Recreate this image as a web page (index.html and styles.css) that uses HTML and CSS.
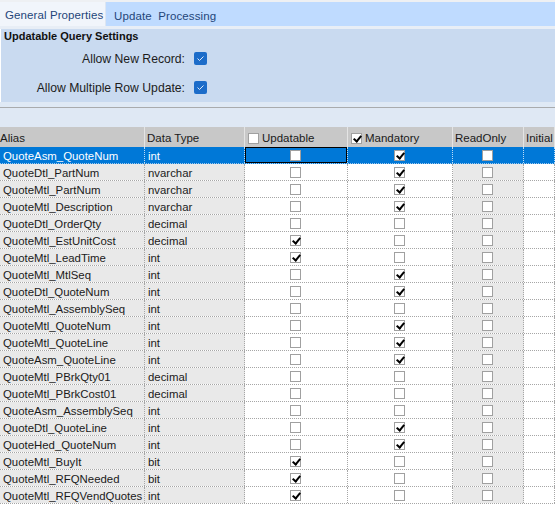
FILE: index.html
```html
<!DOCTYPE html>
<html lang="en">
<head>
    <meta charset="UTF-8">
    <title>Updatable Query Settings</title>
    <link rel="stylesheet" href="styles.css">
</head>
<body>

    <!-- Tabs -->
    <div class="tab-bar">
        <div class="tab active">General Properties</div>
        <div class="tab">Update&nbsp; Processing</div>
    </div>
    <div class="tab-gap"></div>

    <!-- Settings panel -->
    <div class="settings">
        <h3>Updatable Query Settings</h3>
        <div class="options">
            <span class="option-label">Allow New Record:</span>
            <span class="blue-check"><svg viewBox="0 0 13 13"><polyline points="3.5,6.5 5.5,8.5 9.5,4.5" /></svg></span>
            <span class="option-label">Allow Multiple Row Update:</span>
            <span class="blue-check"><svg viewBox="0 0 13 13"><polyline points="3.5,6.5 5.5,8.5 9.5,4.5" /></svg></span>
        </div>
    </div>
    <div class="settings-foot"></div>
    <div class="group-area"></div>

    <!-- Column grid -->
    <div class="grid" id="grid">
        <div class="grid-row header">
            <div class="cell alias">Alias</div>
            <div class="cell">Data Type</div>
            <div class="cell"><span class="box"></span>Updatable</div>
            <div class="cell"><span class="box checked"></span>Mandatory</div>
            <div class="cell">ReadOnly</div>
            <div class="cell">Initial</div>
        </div>
    </div>

    <script>
        // alias, type, updatable, mandatory, readonly
        const columns = [
            ["QuoteAsm_QuoteNum", "int", 0, 1, 0],
            ["QuoteDtl_PartNum", "nvarchar", 0, 1, 0],
            ["QuoteMtl_PartNum", "nvarchar", 0, 1, 0],
            ["QuoteMtl_Description", "nvarchar", 0, 1, 0],
            ["QuoteDtl_OrderQty", "decimal", 0, 0, 0],
            ["QuoteMtl_EstUnitCost", "decimal", 1, 0, 0],
            ["QuoteMtl_LeadTime", "int", 1, 0, 0],
            ["QuoteMtl_MtlSeq", "int", 0, 1, 0],
            ["QuoteDtl_QuoteNum", "int", 0, 1, 0],
            ["QuoteMtl_AssemblySeq", "int", 0, 0, 0],
            ["QuoteMtl_QuoteNum", "int", 0, 1, 0],
            ["QuoteMtl_QuoteLine", "int", 0, 1, 0],
            ["QuoteAsm_QuoteLine", "int", 0, 1, 0],
            ["QuoteMtl_PBrkQty01", "decimal", 0, 0, 0],
            ["QuoteMtl_PBrkCost01", "decimal", 0, 0, 0],
            ["QuoteAsm_AssemblySeq", "int", 0, 0, 0],
            ["QuoteDtl_QuoteLine", "int", 0, 1, 0],
            ["QuoteHed_QuoteNum", "int", 0, 1, 0],
            ["QuoteMtl_BuyIt", "bit", 1, 0, 0],
            ["QuoteMtl_RFQNeeded", "bit", 1, 0, 0],
            ["QuoteMtl_RFQVendQuotes", "int", 1, 0, 0]
        ];

        function box(on) {
            return '<span class="box' + (on ? ' checked' : '') + '"></span>';
        }

        const grid = document.getElementById("grid");
        columns.forEach((col, index) => {
            const row = document.createElement("div");
            row.className = "grid-row" + (index === 0 ? " selected" : "");
            row.innerHTML =
                '<div class="cell text grey">' + col[0] + '</div>' +
                '<div class="cell text grey">' + col[1] + '</div>' +
                '<div class="cell check' + (index === 0 ? ' focus' : '') + '">' + box(col[2]) + '</div>' +
                '<div class="cell check">' + box(col[3]) + '</div>' +
                '<div class="cell check grey">' + box(col[4]) + '</div>' +
                '<div class="cell"></div>';
            grid.appendChild(row);
        });
    </script>

</body>
</html>
```

FILE: styles.css
```css
/* General Reset */
* {
    margin: 0;
    padding: 0;
    box-sizing: border-box;
}

body {
    font-family: 'Liberation Sans', Arial, sans-serif;
    background-color: #fff;
    color: #1a1a1a;
    width: 555px;
    overflow: hidden;
}

/* Tabs */
.tab-bar {
    display: flex;
    height: 26px;
    background-color: #bfdbff;
    border-top: 2px solid #eef0f3;
}

.tab {
    font-size: 11.5px;
    line-height: 28px;
    color: #24457a;
    padding: 0 8px;
    letter-spacing: 0.1px;
}

.tab.active {
    width: 106px;
    padding: 0 0 0 5px;
    line-height: 26px;
    background-color: #f1f5fb;
    border-right: 1px solid #dde6f2;
}

.tab-gap {
    height: 3px;
    background-color: #e8eef6;
}

/* Settings panel */
.settings {
    height: 73px;
    background-color: #c9daf0;
    margin-left: 1px;
}

.settings h3 {
    font-size: 11px;
    font-weight: bold;
    line-height: 14px;
    padding-left: 3px;
    color: #111;
}

.options {
    display: grid;
    grid-template-columns: 184px 13px;
    grid-auto-rows: 29px;
    column-gap: 9px;
    align-items: center;
    padding-top: 1px;
}

.option-label {
    font-size: 12.2px;
    text-align: right;
    color: #1c1c1c;
}

.blue-check {
    width: 13px;
    height: 13px;
    border-radius: 2px;
    background-color: #1c6cc9;
    display: block;
}

.blue-check svg {
    display: block;
    width: 13px;
    height: 13px;
}

.blue-check polyline {
    fill: none;
    stroke: #dfeaf8;
    stroke-width: 1;
}

.settings-foot {
    height: 6px;
    background-color: #dfe9f5;
    border-bottom: 1px solid #a9abad;
}

.group-area {
    height: 19px;
    background-color: #dfe8f4;
}

/* Grid */
.grid-row {
    display: grid;
    grid-template-columns: 145px 100px 103px 105px 71px 1fr;
    height: 17px;
    border-bottom: 1px dotted #a6a6a6;
    font-size: 11.4px;
}

.cell {
    border-right: 1px dotted #a6a6a6;
    display: flex;
    align-items: center;
    white-space: nowrap;
    overflow: hidden;
    padding-top: 1px;
}

.cell.text {
    padding-left: 3px;
}

.cell.grey {
    background-color: #e9e9e9;
}

.cell.check {
    justify-content: center;
    padding-right: 2px;
    padding-top: 0;
}

.grid-row.header {
    height: 20px;
    background-color: #c8c8c8;
    border-bottom: none;
    font-size: 11.5px;
}

.header .cell {
    border-right: 1px solid #e4e4e4;
    padding-left: 2px;
    padding-top: 2px;
    color: #1a1a1a;
}

.header .cell.alias {
    padding-left: 0;
}

.header .box {
    margin: 0 3px 0 1px;
}

.box {
    width: 11px;
    height: 11px;
    border: 1px solid #a0a0a0;
    background-color: #fff;
    display: block;
    position: relative;
    flex-shrink: 0;
}

.box.checked::after {
    content: "";
    position: absolute;
    left: 3px;
    top: 0;
    width: 3px;
    height: 6px;
    border-right: 2px solid #000;
    border-bottom: 2px solid #000;
    transform: rotate(40deg);
}

/* Selected row */
.grid-row.selected {
    background-color: #0078d7;
    border-bottom-color: #9cc8ee;
}

.selected .cell {
    background-color: #0078d7;
    color: #fff;
    border-right-color: #bcdcf6;
}

.selected .cell.focus {
    box-shadow: inset 0 0 0 1px #000;
}
```
